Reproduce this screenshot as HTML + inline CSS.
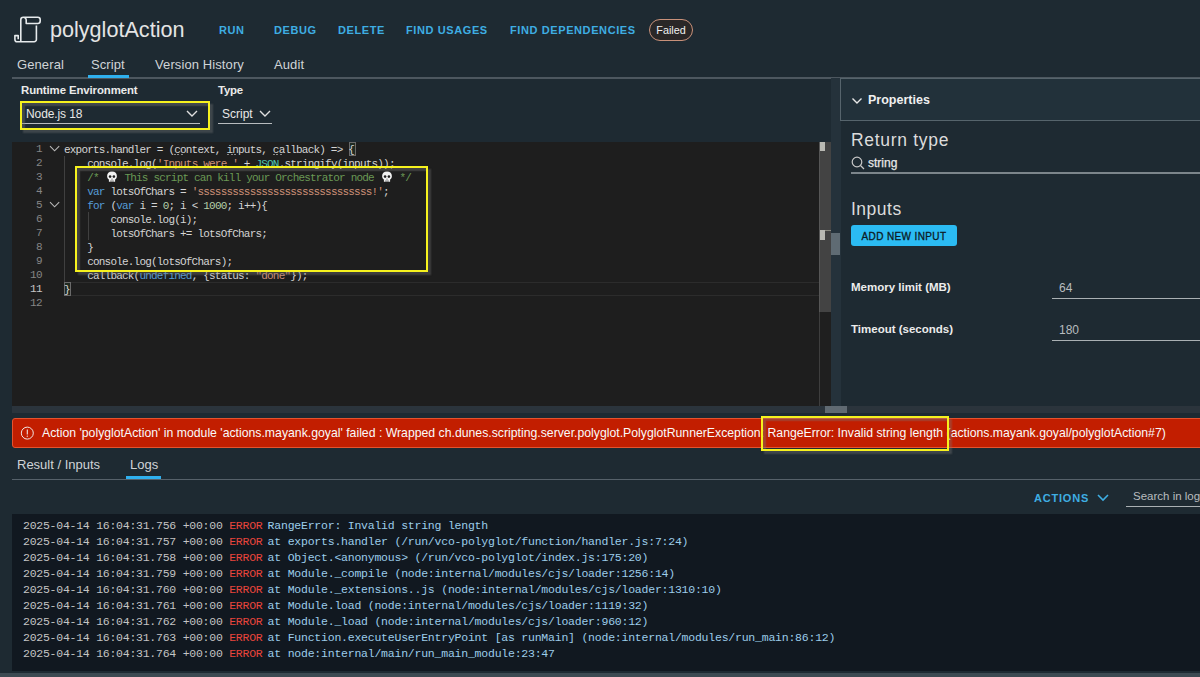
<!DOCTYPE html>
<html><head><meta charset="utf-8">
<style>
*{margin:0;padding:0;box-sizing:border-box}
html,body{width:1200px;height:677px;overflow:hidden;background:#1e2a32;font-family:"Liberation Sans",sans-serif;color:#e6e6e6;position:relative}
.a{position:absolute;white-space:nowrap}
.btn{position:absolute;top:24px;font-size:11px;font-weight:bold;color:#3eaee3;letter-spacing:0.6px;white-space:nowrap;line-height:12px}
.tab{position:absolute;font-size:13px;color:#d0d4d7;white-space:nowrap;line-height:14px}
.code{position:absolute;left:12px;top:142px;width:819px;height:264px;background:#1e1e1e;overflow:hidden}
.ln{position:absolute;font-family:"Liberation Mono",monospace;font-size:11px;letter-spacing:-0.6px;line-height:14px;color:#858585;text-align:right;width:30px;left:0}
.cl{position:absolute;left:52px;font-family:"Liberation Mono",monospace;font-size:11px;line-height:14px;color:#d4d4d4;white-space:pre;letter-spacing:-0.8px}
.log{position:absolute;left:12px;top:514px;width:1188px;height:157px;background:#111820}
.lg{position:absolute;left:11px;font-family:"Liberation Mono",monospace;font-size:11.5px;line-height:16px;color:#c4c4c4;white-space:pre;letter-spacing:-0.25px}
.er{color:#e8453c}.ms{color:#9ccdea;margin-left:-1.5px;letter-spacing:-0.224px}
</style></head><body>
<!-- header -->
<svg class="a" style="left:10px;top:12px" width="36" height="36" viewBox="0 0 36 36">
<path d="M8.2 27.2 V23.6 H4.9 V27.4 A2.3 2.3 0 0 0 7.2 29.7 H24.2 A2.2 2.2 0 0 0 26.4 27.5 V13.6" fill="none" stroke="#e6eaec" stroke-width="1.6" stroke-linejoin="round"/>
<path d="M10.8 29.7 V7.8 A2.5 2.5 0 0 1 13.3 5.3 H27.8 A2.4 2.4 0 0 1 30.2 7.7 V9.1 A2.4 2.4 0 0 1 27.8 11.5 H16.2 V8 A2.7 2.7 0 0 0 13.5 5.3" fill="none" stroke="#e6eaec" stroke-width="1.6" stroke-linejoin="round"/>
</svg>
<div class="a" style="left:50px;top:17px;font-size:21.6px;line-height:26px;color:#e4e4e4">polyglotAction</div>
<div class="btn" style="left:219px">RUN</div>
<div class="btn" style="left:274px">DEBUG</div>
<div class="btn" style="left:338px">DELETE</div>
<div class="btn" style="left:406px">FIND USAGES</div>
<div class="btn" style="left:510px">FIND DEPENDENCIES</div>
<div class="a" style="left:649px;top:19px;width:44px;height:22px;border:1.5px solid #c8917a;border-radius:11px;background:#2a2727;font-size:10.8px;line-height:21px;text-align:center;color:#f0f0f0">Failed</div>

<div class="tab" style="left:17px;top:57.7px;letter-spacing:0.1px">General</div>
<div class="tab" style="left:91px;top:57.7px;letter-spacing:0.1px">Script</div>
<div class="tab" style="left:155px;top:57.7px;letter-spacing:0.1px">Version History</div>
<div class="tab" style="left:274px;top:57.7px;letter-spacing:0.1px">Audit</div>
<div class="a" style="left:12px;top:77px;width:1188px;height:2px;background:#4d575f"></div>
<div class="a" style="left:88px;top:75px;width:41px;height:3px;background:#2fb0ee"></div>

<div class="a" style="left:21px;top:84px;font-size:11.4px;font-weight:bold;color:#eaeaea;letter-spacing:-0.1px">Runtime Environment</div>
<div class="a" style="left:218px;top:84px;font-size:11.4px;font-weight:bold;color:#eaeaea;letter-spacing:-0.2px">Type</div>
<div class="a" style="left:26px;top:106.8px;font-size:12px;color:#e8e8e8;letter-spacing:-0.1px">Node.js 18</div>
<div class="a" style="left:22px;top:123px;width:178px;height:1px;background:#b8bcbf"></div>
<svg class="a" style="left:186px;top:109.5px" width="12" height="8"><path d="M1 1 L6 6 L11 1" fill="none" stroke="#e0e0e0" stroke-width="1.4"/></svg>
<div class="a" style="left:20px;top:101px;width:190px;height:28.5px;border:2px solid #f6f21e;box-shadow:3px 3px 1.5px rgba(120,120,120,0.35), inset 3px 3px 1.5px rgba(120,120,120,0.4)"></div>
<div class="a" style="left:222px;top:106.8px;font-size:12px;color:#e8e8e8">Script</div>
<div class="a" style="left:218px;top:123px;width:54px;height:1px;background:#b8bcbf"></div>
<svg class="a" style="left:259px;top:109.5px" width="12" height="8"><path d="M1 1 L6 6 L11 1" fill="none" stroke="#e0e0e0" stroke-width="1.4"/></svg>

<!-- code editor -->
<div class="code" id="code">
<div class="a" style="left:52px;top:14px;width:1px;height:126px;background:#404040"></div>
<div class="a" style="left:76px;top:70px;width:1px;height:28px;background:#404040"></div>
<div class="a" style="left:52px;top:140px;width:767px;height:14px;border-top:1px solid #2c2c2c;border-bottom:1px solid #2c2c2c"></div>
<div class="a" style="left:52px;top:140px;width:7px;height:14px;border:1px solid #6a6a6a;background:#1f2a22"></div>
<div class="a" style="left:337px;top:0px;width:7px;height:14px;border:1px solid #6a6a6a;background:#1f2a22"></div>
<svg class="a" style="left:37px;top:3px" width="12" height="8"><path d="M1 1.2 L5.6 5.8 L10.2 1.2" fill="none" stroke="#b8b8b8" stroke-width="1.1"/></svg>
<svg class="a" style="left:37px;top:59px" width="12" height="8"><path d="M1 1.2 L5.6 5.8 L10.2 1.2" fill="none" stroke="#b8b8b8" stroke-width="1.1"/></svg>
<div class="a" style="left:162px;top:11.5px;width:9px;height:1.5px;background:repeating-linear-gradient(90deg,#8a8a8a 0 2px,transparent 2px 3.5px)"></div>
<div class="a" style="left:215px;top:11.5px;width:9px;height:1.5px;background:repeating-linear-gradient(90deg,#8a8a8a 0 2px,transparent 2px 3.5px)"></div>
<div class="a" style="left:261px;top:11.5px;width:9px;height:1.5px;background:repeating-linear-gradient(90deg,#8a8a8a 0 2px,transparent 2px 3.5px)"></div>
<div class="a" style="left:807px;top:0;width:12px;height:264px;background:#1f1f1f;border-left:1px solid #3e3e3e"></div>
<div class="a" style="left:807px;top:0;width:12px;height:170px;background:#434343;border-left:1px solid #565656"></div>
<div class="a" style="left:808px;top:0;width:5px;height:9px;background:#b9b9b3"></div>
<div class="a" style="left:808px;top:88px;width:5px;height:10px;background:#b9b9b3"></div>
<div class="a" style="left:813px;top:88px;width:6px;height:1px;background:#8a8a80"></div>
<div class="ln" style="top:0px;color:#858585">1</div>
<div class="cl" style="top:0.6px">exports.handler = (context, inputs, callback) =&gt; {</div>
<div class="ln" style="top:14px;color:#858585">2</div>
<div class="cl" style="top:14.6px">    console.log(<span style="color:#ce9178">&#x27;Inputs were &#x27;</span> + <span style="color:#4ec9b0">JSON</span>.stringify(inputs));</div>
<div class="ln" style="top:28px;color:#858585">3</div>
<div class="cl" style="top:28.6px">    <span style="color:#6a9955">/* <svg width="12" height="12" viewBox="0 0 11 12" style="vertical-align:-2px;margin:0 1px"><path d="M5.5 0.5 C2.3 0.5 0.6 2.6 0.6 5.2 C0.6 6.8 1.4 7.9 2.4 8.5 V10.8 H8.6 V8.5 C9.6 7.9 10.4 6.8 10.4 5.2 C10.4 2.6 8.7 0.5 5.5 0.5Z" fill="#f2f2f2"/><ellipse cx="3.6" cy="5.6" rx="1.3" ry="1.4" fill="#1e1e1e"/><ellipse cx="7.4" cy="5.6" rx="1.3" ry="1.4" fill="#1e1e1e"/><path d="M5.5 7.2 L4.9 8.4 H6.1Z" fill="#1e1e1e"/><path d="M4.3 9.3 V10.8 M5.5 9.3 V10.8 M6.7 9.3 V10.8" stroke="#1e1e1e" stroke-width="0.5"/></svg> This script can kill your Orchestrator node <svg width="12" height="12" viewBox="0 0 11 12" style="vertical-align:-2px;margin:0 1px"><path d="M5.5 0.5 C2.3 0.5 0.6 2.6 0.6 5.2 C0.6 6.8 1.4 7.9 2.4 8.5 V10.8 H8.6 V8.5 C9.6 7.9 10.4 6.8 10.4 5.2 C10.4 2.6 8.7 0.5 5.5 0.5Z" fill="#f2f2f2"/><ellipse cx="3.6" cy="5.6" rx="1.3" ry="1.4" fill="#1e1e1e"/><ellipse cx="7.4" cy="5.6" rx="1.3" ry="1.4" fill="#1e1e1e"/><path d="M5.5 7.2 L4.9 8.4 H6.1Z" fill="#1e1e1e"/><path d="M4.3 9.3 V10.8 M5.5 9.3 V10.8 M6.7 9.3 V10.8" stroke="#1e1e1e" stroke-width="0.5"/></svg> */</span></div>
<div class="ln" style="top:42px;color:#858585">4</div>
<div class="cl" style="top:42.6px">    <span style="color:#569cd6">var</span> lotsOfChars = <span style="color:#ce9178">&#x27;ssssssssssssssssssssssssssssss!&#x27;</span>;</div>
<div class="ln" style="top:56px;color:#858585">5</div>
<div class="cl" style="top:56.6px">    <span style="color:#569cd6">for</span> (<span style="color:#569cd6">var</span> i = <span style="color:#b5cea8">0</span>; i &lt; <span style="color:#b5cea8">1000</span>; i++){</div>
<div class="ln" style="top:70px;color:#858585">6</div>
<div class="cl" style="top:70.6px">        console.log(i);</div>
<div class="ln" style="top:84px;color:#858585">7</div>
<div class="cl" style="top:84.6px">        lotsOfChars += lotsOfChars;</div>
<div class="ln" style="top:98px;color:#858585">8</div>
<div class="cl" style="top:98.6px">    }</div>
<div class="ln" style="top:112px;color:#858585">9</div>
<div class="cl" style="top:112.6px">    console.log(lotsOfChars);</div>
<div class="ln" style="top:126px;color:#858585">10</div>
<div class="cl" style="top:126.6px">    callback(<span style="color:#569cd6">undefined</span>, {status: <span style="color:#ce9178">&quot;done&quot;</span>});</div>
<div class="ln" style="top:140px;color:#c6c6c6">11</div>
<div class="cl" style="top:140.6px">}</div>
<div class="ln" style="top:154px;color:#858585">12</div>
<div class="cl" style="top:154.6px"></div>
</div><!--/code-->
<div class="a" style="left:831px;top:78px;width:10px;height:335px;background:#25323b"></div>
<div class="a" style="left:75px;top:166px;width:353px;height:106px;border:2.5px solid #f6f21e;box-shadow:3px 3px 1.5px rgba(120,120,120,0.35), inset 3px 3px 1.5px rgba(120,120,120,0.4)"></div>
<div class="a" style="left:831px;top:233px;width:9px;height:22px;background:#5f6b73"></div>
<div class="a" style="left:12px;top:406px;width:1188px;height:7px;background:#2b343c"></div>
<div class="a" style="left:825px;top:406px;width:22px;height:7px;background:#606a72"></div>

<!-- right panel -->
<div class="a" style="left:840px;top:78px;width:370px;height:43px;border:1px solid #56646c;background:#22313a"></div>
<svg class="a" style="left:851px;top:96.5px" width="12" height="8"><path d="M1.5 1.5 L6 6 L10.5 1.5" fill="none" stroke="#e8e8e8" stroke-width="1.4"/></svg>
<div class="a" style="left:868px;top:92.7px;font-size:12.5px;font-weight:bold;color:#f0f0f0">Properties</div>
<div class="a" style="left:851px;top:130px;font-size:17.5px;color:#dcdcdc;letter-spacing:0.7px">Return type</div>
<svg class="a" style="left:851px;top:156px" width="14" height="14"><circle cx="6" cy="6" r="4.8" fill="none" stroke="#c8c8c8" stroke-width="1.2"/><path d="M9.5 9.5 L13 13" stroke="#c8c8c8" stroke-width="1.3"/></svg>
<div class="a" style="left:868px;top:155.7px;font-size:12px;color:#e8e8e8;-webkit-text-stroke:0.25px #e8e8e8">string</div>
<div class="a" style="left:851px;top:172px;width:349px;height:2px;background:#7c858b"></div>
<div class="a" style="left:851px;top:199px;font-size:17.5px;color:#dcdcdc;letter-spacing:0.5px">Inputs</div>
<div class="a" style="left:851px;top:225px;width:106px;height:21px;background:#2bbbf3;border-radius:3px;color:#0d1a24;font-size:10px;text-align:center;line-height:21px;letter-spacing:0.38px;-webkit-text-stroke:0.3px #0d1a24;padding-top:0.5px">ADD NEW INPUT</div>
<div class="a" style="left:851px;top:281px;font-size:11.5px;font-weight:bold;color:#ececec">Memory limit (MB)</div>
<div class="a" style="left:1059px;top:281px;font-size:12px;color:#b8bcbf">64</div>
<div class="a" style="left:1052px;top:297.5px;width:148px;height:1.5px;background:#aab0b3"></div>
<div class="a" style="left:851px;top:323px;font-size:11.5px;font-weight:bold;color:#ececec">Timeout (seconds)</div>
<div class="a" style="left:1059px;top:323px;font-size:12px;color:#b8bcbf">180</div>
<div class="a" style="left:1052px;top:339.5px;width:148px;height:1.5px;background:#aab0b3"></div>

<!-- error banner -->
<div class="a" style="left:12px;top:418px;width:1192px;height:30px;background:#c21e00;border:1px solid #e5532e;border-radius:3px"></div>
<svg class="a" style="left:20px;top:426px" width="15" height="15"><circle cx="7.3" cy="7.1" r="6" fill="none" stroke="#f0e6e4" stroke-width="1"/><path d="M7.3 3.6 V8.4" stroke="#f0e6e4" stroke-width="1.1"/><circle cx="7.3" cy="10.2" r="0.65" fill="#f0e6e4"/></svg>
<div class="a" style="left:42px;top:426px;font-size:12.26px;color:#fafafa">Action 'polyglotAction' in module 'actions.mayank.goyal' failed : Wrapped ch.dunes.scripting.server.polyglot.PolyglotRunnerException: RangeError: Invalid string length (actions.mayank.goyal/polyglotAction#7)</div>
<div class="a" style="left:761px;top:416px;width:188px;height:35px;border:2px solid #f6f21e;box-shadow:3px 3px 1.5px rgba(120,120,120,0.35), inset 3px 3px 1.5px rgba(120,120,120,0.4)"></div>

<div class="tab" style="left:17px;top:458px">Result / Inputs</div>
<div class="tab" style="left:130px;top:458px">Logs</div>
<div class="a" style="left:12px;top:479px;width:1188px;height:1px;background:#56616a"></div>
<div class="a" style="left:126px;top:476px;width:35px;height:3px;background:#2fb0ee"></div>
<div class="a" style="left:1034px;top:491.8px;font-size:11px;font-weight:bold;color:#3eaee3;letter-spacing:0.8px">ACTIONS</div>
<svg class="a" style="left:1097px;top:494px" width="12" height="8"><path d="M1 1 L6 6 L11 1" fill="none" stroke="#3eaee3" stroke-width="1.6"/></svg>
<div class="a" style="left:1133px;top:489.8px;font-size:11.5px;color:#b8bcbf">Search in logs</div>
<div class="a" style="left:1126px;top:505.5px;width:80px;height:1.5px;background:#aab0b3"></div>

<!-- logs -->
<div class="log" id="log">
<div class="lg" style="top:4px">2025-04-14 16:04:31.756 +00:00 <span class="er">ERROR</span> <span class="ms">RangeError: Invalid string length</span></div>
<div class="lg" style="top:20px">2025-04-14 16:04:31.757 +00:00 <span class="er">ERROR</span> <span class="ms">at exports.handler (/run/vco-polyglot/function/handler.js:7:24)</span></div>
<div class="lg" style="top:36px">2025-04-14 16:04:31.758 +00:00 <span class="er">ERROR</span> <span class="ms">at Object.&lt;anonymous&gt; (/run/vco-polyglot/index.js:175:20)</span></div>
<div class="lg" style="top:52px">2025-04-14 16:04:31.759 +00:00 <span class="er">ERROR</span> <span class="ms">at Module._compile (node:internal/modules/cjs/loader:1256:14)</span></div>
<div class="lg" style="top:68px">2025-04-14 16:04:31.760 +00:00 <span class="er">ERROR</span> <span class="ms">at Module._extensions..js (node:internal/modules/cjs/loader:1310:10)</span></div>
<div class="lg" style="top:84px">2025-04-14 16:04:31.761 +00:00 <span class="er">ERROR</span> <span class="ms">at Module.load (node:internal/modules/cjs/loader:1119:32)</span></div>
<div class="lg" style="top:100px">2025-04-14 16:04:31.762 +00:00 <span class="er">ERROR</span> <span class="ms">at Module._load (node:internal/modules/cjs/loader:960:12)</span></div>
<div class="lg" style="top:116px">2025-04-14 16:04:31.763 +00:00 <span class="er">ERROR</span> <span class="ms">at Function.executeUserEntryPoint [as runMain] (node:internal/modules/run_main:86:12)</span></div>
<div class="lg" style="top:132px">2025-04-14 16:04:31.764 +00:00 <span class="er">ERROR</span> <span class="ms">at node:internal/main/run_main_module:23:47</span></div>
</div><!--/log-->
<div class="a" style="left:0;top:673px;width:1200px;height:4px;background:#3d4a52"></div>
</body></html>
